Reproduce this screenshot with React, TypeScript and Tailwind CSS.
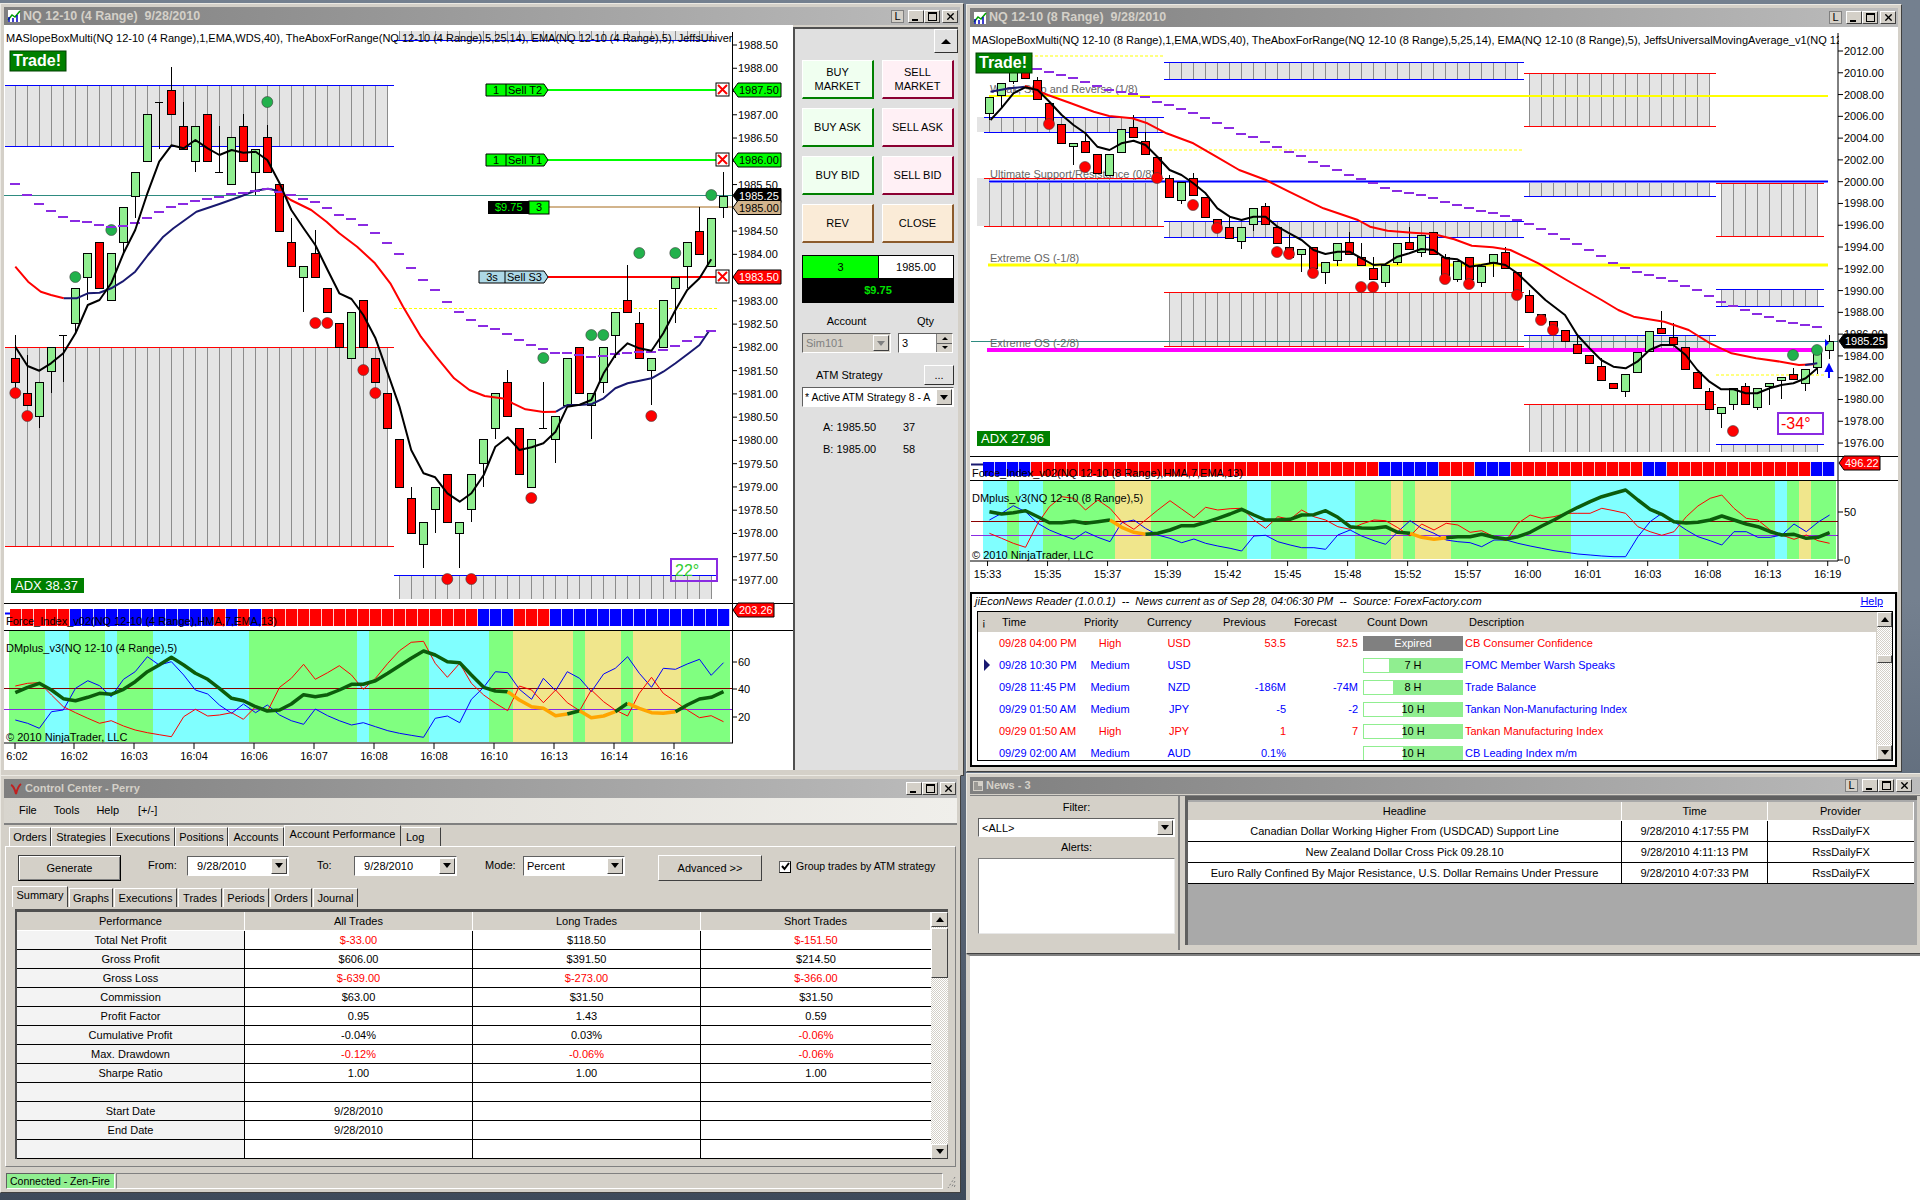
import type { ReactNode } from 'react';
import { X } from 'lucide-react';

type Bar = [string, number, number, number?, number?];
type Dot = [number, number];

const scale = (sx: number, ox: number, oy = 0) => (pts: number[][]) =>
  pts.map(([x, y]) => `${(ox + x / sx).toFixed(1)},${(oy + y / 3).toFixed(1)}`).join(' ');

const zA = scale(1.96, 0); // left chart
const zB = scale(1.96, 0, 400); // left lower panels
const z3 = scale(2.613, 780); // right chart, left half
const z4 = scale(2.85, 1370); // right chart, right half
const z5 = scale(1.633, 960, 300); // right chart, bottom

const LX = 15.3;
const RX = 989;

const leftBars: Bar[] = [
  ['r', 358, 382, 335, 388], ['r', 393, 405, 355], ['g', 382, 416, 0, 428], ['g', 347, 371, 0, 393],
  ['k', 335, 335, 335, 382], ['g', 288, 323, 0, 333], ['g', 253, 277, 0, 300], ['r', 242, 288],
  ['g', 253, 300], ['g', 207, 242, 0, 255], ['g', 172, 196, 0, 218], ['g', 114, 161],
  ['k', 102, 102, 102, 149], ['r', 90, 114, 67], ['r', 126, 149, 102], ['g', 126, 161, 0, 172],
  ['r', 114, 161], ['k', 172, 172, 126, 172], ['g', 137, 184], ['r', 126, 161, 114],
  ['g', 149, 172, 0, 195], ['r', 137, 172, 125], ['r', 184, 231], ['r', 242, 266, 218],
  ['g', 266, 277, 0, 312], ['r', 253, 277, 230], ['r', 288, 312], ['r', 323, 347],
  ['g', 312, 358], ['r', 300, 347], ['r', 358, 382], ['r', 393, 428],
  ['r', 439, 487], ['r', 498, 533, 487], ['g', 522, 544, 0, 568], ['g', 487, 509, 0, 533],
  ['r', 474, 522], ['g', 522, 533, 0, 568], ['g', 474, 509, 0, 522], ['g', 439, 463, 0, 487],
  ['g', 393, 428, 0, 439], ['r', 382, 416, 370], ['r', 428, 474], ['g', 439, 487],
  ['k', 428, 428, 382, 428], ['g', 416, 439, 0, 463], ['g', 358, 405], ['r', 347, 393],
  ['g', 393, 405, 0, 439], ['g', 347, 382, 0, 393], ['g', 312, 335, 0, 358], ['r', 300, 312, 265],
  ['r', 323, 358, 312], ['g', 358, 370, 0, 405], ['g', 300, 347], ['g', 277, 288, 0, 323],
  ['g', 242, 266, 0, 288], ['r', 231, 254, 207], ['g', 218, 266], ['g', 196, 207, 172, 218],
];

const rightBars: Bar[] = [
  ['g', 97, 113, 0, 120], ['g', 83, 95, 0, 107], ['g', 72, 81, 0, 84], ['r', 72, 78], ['r', 80, 99, 77],
  ['r', 103, 122], ['r', 124, 143], ['g', 143, 146, 0, 165], ['r', 141, 152, 132], ['r', 154, 173],
  ['g', 154, 175], ['g', 129, 152], ['r', 127, 137, 115], ['r', 141, 154, 132], ['r', 157, 176],
  ['r', 178, 197, 175], ['g', 182, 200, 0, 204], ['r', 178, 195, 173], ['r', 197, 217], ['r', 219, 227],
  ['r', 227, 238, 217], ['g', 227, 241, 0, 249], ['g', 208, 224, 0, 231], ['r', 206, 224, 203], ['r', 227, 243],
  ['r', 247, 257, 235], ['g', 249, 254, 0, 272], ['r', 247, 268], ['g', 262, 272, 0, 284], ['g', 243, 260, 0, 266],
  ['r', 242, 254, 232], ['r', 257, 265, 243], ['r', 268, 279, 257], ['g', 265, 282, 0, 287], ['g', 243, 262, 0, 265],
  ['r', 242, 249, 227], ['g', 235, 252, 0, 257], ['r', 232, 254], ['r', 257, 275, 254], ['g', 261, 279, 0, 282],
  ['r', 257, 279], ['g', 266, 282, 0, 287], ['g', 254, 262, 0, 277], ['r', 252, 268, 247], ['r', 272, 292],
  ['r', 295, 312, 290], ['r', 314, 322], ['r', 321, 332], ['r', 330, 341], ['r', 344, 353, 335],
  ['r', 355, 363], ['r', 366, 380, 358], ['r', 383, 388], ['g', 374, 391, 0, 397], ['g', 352, 372],
  ['g', 331, 351], ['r', 328, 333, 311], ['r', 337, 344, 323], ['r', 347, 369], ['r', 372, 388],
  ['r', 391, 409, 388], ['g', 407, 413, 0, 428], ['g', 388, 404, 0, 410], ['r', 386, 404, 383], ['g', 388, 407, 0, 410],
  ['g', 383, 386, 0, 405], ['g', 377, 380, 0, 399], ['r', 374, 379, 368], ['g', 369, 383, 0, 391], ['g', 350, 367, 0, 374],
  ['g', 341, 350, 335, 359],
];

const leftRedDots: Dot[] = [[0, 393], [1, 416], [25, 323], [26, 323], [29, 370], [30, 393], [36, 579], [38, 579], [43, 498], [53, 416]];
const leftGreenDots: Dot[] = [[5, 277], [8, 230], [21, 102], [44, 358], [48, 335], [49, 335], [52, 253], [55, 253], [58, 195]];
const rightRedDots: Dot[] = [[5, 124], [8, 167], [14, 178], [17, 205], [19, 228], [24, 252], [25, 254], [27, 273], [31, 287], [32, 287], [38, 279], [40, 284], [44, 295], [46, 320], [47, 330], [62, 431]];
const rightGreenDots: Dot[] = [[67, 355], [69, 350]];

const leftDashes = [552, 584, 612, 632, 651, 662, 666, 675, 680, 678, 668, 654, 636, 621, 612, 603, 597, 591, 582, 578, 572, 568, 575, 584, 596, 606, 624, 645, 656, 675, 698, 729, 762, 804, 840, 870, 906, 936, 960, 978, 987, 1002, 1020, 1035, 1047, 1058, 1059, 1065, 1071, 1067, 1062, 1058, 1056, 1055, 1050, 1038, 1023, 1011, 993];
const rightDashes = [208, 215, 225, 234, 245, 258, 270, 275, 282, 290, 305, 315, 327, 339, 353, 368, 385, 402, 410, 426, 440, 455, 467, 485, 497, 510, 524, 537, 548, 563, 572, 578, 585, 594, 605, 615, 624, 632, 638, 648, 660, 672, 687, 702, 717, 732, 749, 767, 789, 804, 816, 825, 833, 843, 857, 870, 887, 905, 917, 930, 942, 952, 962, 968, 975, 980];

const leftBlack = zA([[30, 1040], [54, 1098], [77, 1112], [100, 1090], [124, 1060], [148, 1000], [172, 915], [195, 900], [218, 850], [242, 760], [265, 690], [289, 580], [312, 485], [336, 436], [360, 445], [383, 420], [407, 445], [430, 465], [454, 450], [477, 458], [501, 455], [524, 480], [548, 550], [571, 630], [595, 685], [618, 735], [642, 810], [665, 880], [689, 897], [712, 945], [736, 1015], [760, 1120], [783, 1220], [806, 1350], [830, 1420], [853, 1432], [877, 1480], [901, 1505], [924, 1480], [948, 1425], [971, 1340], [995, 1312], [1018, 1350], [1042, 1342], [1065, 1330], [1089, 1295], [1112, 1220], [1136, 1214], [1159, 1200], [1183, 1120], [1206, 1065], [1230, 1030], [1253, 1045], [1277, 1052], [1300, 1000], [1324, 930], [1347, 870], [1371, 835], [1394, 778]]);
const leftRedA = zA([[30, 800], [55, 845], [80, 875], [100, 885], [125, 895]]);
const leftRedB = zA([[545, 572], [570, 600], [610, 630], [640, 665], [665, 700], [700, 740], [735, 790], [765, 850], [790, 920], [825, 1010], [855, 1070], [890, 1135], [920, 1170], [950, 1188], [990, 1196], [1005, 1210], [1030, 1228], [1065, 1236], [1090, 1235]]);
const leftNavyA = zA([[125, 895], [150, 895], [172, 880], [195, 878], [218, 865], [240, 845], [265, 815], [290, 765], [320, 710], [340, 685], [385, 635], [430, 612], [470, 590], [500, 572], [525, 566], [545, 572]]);
const leftNavyB = zA([[1090, 1235], [1112, 1215], [1136, 1215], [1160, 1212], [1183, 1195], [1206, 1165], [1230, 1150], [1277, 1135], [1300, 1115], [1324, 1090], [1350, 1060], [1371, 1035], [1390, 992]]);

const leftDmBands: [number, number, string][] = [[18, 88, 'g'], [88, 135, 'c'], [135, 206, 'g'], [206, 229, 'c'], [229, 300, 'g'], [300, 488, 'c'], [488, 700, 'g'], [700, 723, 'c'], [723, 841, 'g'], [841, 958, 'c'], [958, 1005, 'g'], [1005, 1123, 'y'], [1123, 1147, 'g'], [1147, 1217, 'y'], [1217, 1241, 'g'], [1241, 1335, 'y'], [1335, 1430, 'g']];
const rightDmBands: [number, number, string][] = [[38, 77, 'c'], [77, 96, 'g'], [96, 136, 'c'], [136, 253, 'g'], [253, 312, 'y'], [312, 469, 'g'], [469, 508, 'c'], [508, 567, 'g'], [567, 645, 'c'], [645, 704, 'g'], [704, 723, 'y'], [723, 743, 'g'], [743, 802, 'y'], [802, 998, 'g'], [998, 1174, 'c'], [1174, 1331, 'g'], [1331, 1351, 'c'], [1351, 1370, 'g'], [1370, 1390, 'y'], [1390, 1430, 'g']];
const bandColor: Record<string, string> = { g: '#80ff80', c: '#80ffff', y: '#f0e68c' };

const leftDmBlue = zB([[30, 960], [54, 970], [77, 985], [101, 935], [124, 930], [148, 865], [172, 842], [195, 857], [218, 890], [242, 838], [265, 815], [289, 770], [312, 795], [336, 785], [360, 825], [383, 870], [407, 882], [430, 915], [454, 940], [477, 912], [501, 938], [524, 915], [548, 945], [571, 962], [595, 973], [618, 927], [642, 947], [665, 962], [689, 975], [712, 968], [736, 980], [760, 992], [783, 1000], [806, 1006], [830, 1012], [853, 955], [877, 948], [901, 968], [924, 898], [948, 862], [971, 815], [995, 818], [1018, 868], [1042, 898], [1065, 835], [1089, 872], [1112, 815], [1136, 835], [1159, 875], [1183, 822], [1206, 805], [1230, 770], [1253, 820], [1277, 862], [1300, 805], [1324, 808], [1347, 792], [1371, 778], [1394, 826], [1418, 788]]);
const leftDmRed = zB([[30, 858], [54, 850], [77, 848], [101, 885], [124, 920], [148, 938], [172, 955], [195, 970], [218, 962], [242, 978], [265, 990], [289, 998], [312, 1004], [336, 1010], [360, 950], [383, 928], [407, 948], [430, 945], [454, 938], [477, 958], [501, 920], [524, 935], [548, 862], [571, 835], [595, 793], [618, 838], [642, 818], [665, 797], [689, 825], [712, 868], [736, 835], [760, 790], [783, 752], [806, 727], [830, 724], [853, 790], [877, 832], [901, 790], [924, 850], [948, 885], [971, 910], [995, 932], [1018, 858], [1042, 870], [1065, 908], [1089, 870], [1112, 908], [1136, 932], [1159, 870], [1183, 905], [1206, 930], [1230, 948], [1253, 880], [1277, 832], [1300, 880], [1324, 905], [1347, 930], [1371, 953], [1394, 947], [1418, 965]]);
const leftDmThick: [string, string][] = [
  ['#0b5c0b', zB([[30, 878], [54, 862], [77, 850], [101, 870], [124, 896], [148, 902], [172, 892], [195, 880], [218, 883], [242, 868], [265, 845], [289, 815], [312, 795], [336, 772], [360, 795], [383, 820], [407, 838], [430, 865], [454, 895], [477, 902], [501, 920], [524, 933], [548, 930], [571, 912], [595, 884], [618, 890], [642, 884], [665, 870], [689, 853], [712, 853], [736, 842], [760, 820], [783, 797], [806, 775], [830, 753], [853, 765], [877, 785], [901, 788], [924, 825], [948, 862], [971, 873], [995, 875]])],
  ['#ffa500', zB([[995, 875], [1018, 900], [1042, 920], [1065, 925], [1089, 947], [1112, 942]])],
  ['#0b5c0b', zB([[1112, 942], [1136, 932]])],
  ['#ffa500', zB([[1136, 932], [1159, 953], [1183, 948], [1206, 935]])],
  ['#0b5c0b', zB([[1206, 935], [1230, 910]])],
  ['#ffa500', zB([[1230, 910], [1253, 925], [1277, 938], [1300, 940], [1324, 935]])],
  ['#0b5c0b', zB([[1324, 935], [1347, 915], [1371, 897], [1394, 892], [1418, 875]])],
];

const rightBlack = `${z3([[550, 360], [578, 325], [610, 280], [641, 262], [673, 270], [704, 305], [736, 345], [767, 375], [798, 400], [829, 440], [861, 450], [892, 430], [924, 422], [955, 435], [986, 470], [1018, 510], [1049, 525], [1080, 550], [1112, 580], [1143, 625], [1175, 650], [1206, 660], [1237, 650], [1269, 650], [1300, 680], [1331, 700], [1363, 720], [1394, 750], [1425, 762], [1457, 755], [1488, 755], [1520, 775], [1551, 795]])} ${z4([[43, 793], [78, 770], [112, 760], [146, 747], [181, 750], [215, 775], [249, 778], [283, 800], [317, 795], [352, 788], [386, 795], [420, 820], [455, 855], [500, 900]])} ${z5([[988, 45], [1008, 105], [1028, 145], [1047, 180], [1067, 200], [1087, 205], [1106, 185], [1126, 150], [1145, 135], [1165, 135], [1185, 165], [1204, 210], [1224, 245], [1243, 268], [1263, 268], [1283, 280], [1302, 280], [1322, 265], [1341, 255], [1361, 250], [1381, 235], [1400, 205]])}`;
const rightRed = `${z3([[640, 258], [700, 285], [760, 310], [820, 335], [860, 348], [920, 355], [960, 370], [1010, 400], [1080, 430], [1140, 470], [1200, 510], [1270, 540], [1330, 575], [1420, 625], [1510, 660]])} ${z4([[0, 680], [50, 692], [120, 698], [180, 702], [240, 718], [290, 737], [350, 742], [400, 750], [480, 790], [560, 840], [610, 870], [660, 900]])} ${z5([[1075, 30], [1100, 50], [1150, 65], [1190, 90], [1225, 130], [1260, 160], [1300, 175], [1340, 185], [1370, 195], [1395, 193]])}`;

const rightDmBlue = z5([[48, 660], [68, 640], [87, 617], [107, 635], [127, 670], [146, 690], [166, 705], [186, 718], [205, 695], [225, 712], [245, 725], [264, 668], [284, 660], [303, 685], [323, 705], [343, 715], [362, 728], [382, 717], [401, 730], [421, 738], [441, 745], [460, 753], [480, 708], [499, 706], [519, 725], [539, 735], [558, 743], [578, 743], [597, 748], [617, 705], [637, 690], [656, 708], [676, 722], [695, 733], [715, 695], [735, 662], [754, 685], [774, 700], [794, 720], [813, 725], [833, 728], [852, 740], [872, 720], [892, 720], [911, 730], [931, 738], [950, 745], [970, 752], [990, 757], [1009, 762], [1029, 765], [1048, 768], [1068, 770], [1087, 770], [1107, 710], [1127, 665], [1146, 640], [1166, 665], [1186, 690], [1205, 710], [1225, 722], [1244, 735], [1264, 695], [1284, 695], [1303, 712], [1323, 712], [1342, 705], [1362, 672], [1382, 695], [1401, 667], [1420, 645]]);
const rightDmRed = z5([[48, 700], [68, 715], [87, 730], [107, 742], [127, 670], [146, 620], [166, 590], [186, 595], [205, 630], [225, 600], [245, 625], [264, 665], [284, 688], [303, 660], [323, 630], [343, 602], [362, 627], [382, 653], [401, 622], [421, 630], [441, 626], [460, 625], [480, 660], [499, 685], [519, 650], [539, 658], [558, 630], [578, 650], [597, 660], [617, 680], [637, 688], [656, 672], [676, 660], [695, 662], [715, 683], [735, 708], [754, 672], [774, 690], [794, 670], [813, 675], [833, 697], [852, 692], [872, 710], [892, 722], [911, 670], [931, 645], [950, 655], [970, 650], [990, 640], [1009, 640], [1029, 640], [1048, 625], [1068, 632], [1087, 640], [1107, 680], [1127, 695], [1146, 706], [1166, 695], [1186, 650], [1205, 618], [1225, 595], [1244, 585], [1264, 625], [1284, 655], [1303, 660], [1323, 690], [1342, 705], [1362, 718], [1382, 705], [1401, 722], [1420, 730]]);
const rightDmThick: [string, string][] = [
  ['#0b5c0b', z5([[48, 635], [68, 642], [87, 638], [107, 632], [127, 650], [146, 668], [166, 668], [186, 664], [205, 670], [225, 665], [245, 660]])],
  ['#ffa500', z5([[245, 660], [264, 682], [284, 697], [303, 703]])],
  ['#0b5c0b', z5([[303, 703], [323, 700], [343, 690], [362, 677], [382, 677], [401, 667], [421, 655], [441, 642], [460, 628], [480, 645], [499, 660], [519, 660], [539, 658], [558, 645], [578, 644], [597, 632], [617, 652], [637, 680], [656, 684], [676, 685], [695, 680], [715, 697], [735, 700]])],
  ['#ffa500', z5([[735, 700], [754, 712], [774, 718], [794, 713]])],
  ['#0b5c0b', z5([[794, 713], [813, 710], [833, 710], [852, 703], [872, 712], [892, 717], [911, 710], [931, 697], [950, 678], [970, 660], [990, 640], [1009, 622], [1029, 605], [1048, 590], [1068, 580], [1087, 570], [1107, 600], [1127, 628], [1146, 643], [1166, 665], [1186, 669], [1205, 667], [1225, 660], [1244, 648], [1264, 660], [1284, 672], [1303, 680], [1323, 695], [1342, 705], [1362, 703], [1382, 715], [1401, 712], [1420, 698]])],
];

const leftPrices = ['1988.50', '1988.00', '1987.50', '1987.00', '1986.50', '1986.00', '1985.50', '1985.00', '1984.50', '1984.00', '1983.50', '1983.00', '1982.50', '1982.00', '1981.50', '1981.00', '1980.50', '1980.00', '1979.50', '1979.00', '1978.50', '1978.00', '1977.50', '1977.00'];
const rightPrices = ['2012.00', '2010.00', '2008.00', '2006.00', '2004.00', '2002.00', '2000.00', '1998.00', '1996.00', '1994.00', '1992.00', '1990.00', '1988.00', '1986.00', '1984.00', '1982.00', '1980.00', '1978.00', '1976.00'];
const leftTimes: [string, number][] = [['6:02', 17], ['16:02', 74], ['16:03', 134], ['16:04', 194], ['16:06', 254], ['16:07', 314], ['16:08', 374], ['16:08', 434], ['16:10', 494], ['16:13', 554], ['16:14', 614], ['16:16', 674]];
const rightTimes: [string, number][] = [['15:33', 45], ['15:35', 143], ['15:37', 241], ['15:39', 339], ['15:42', 437], ['15:45', 535], ['15:48', 633], ['15:52', 731], ['15:57', 829], ['16:00', 927], ['16:01', 1025], ['16:03', 1123], ['16:08', 1221], ['16:13', 1319], ['16:19', 1417]];

// runs of force index squares
const leftForce: [string, number][] = [['r', 5], ['b', 12], ['r', 1], ['b', 1], ['r', 1], ['b', 1], ['r', 18], ['b', 3], ['r', 3], ['b', 15]];
const rightForce: [string, number][] = [['b', 4], ['r', 29], ['b', 5], ['r', 3], ['b', 3], ['r', 11], ['b', 2], ['r', 12], ['b', 2]];

function expand(runs: [string, number][]) {
  return runs.flatMap(([c, n]) => Array.from({ length: n }, () => c));
}

function Candles({ bars, x0, w }: { bars: Bar[]; x0: number; w: number }) {
  return (
    <g shapeRendering="crispEdges">
      {bars.map(([c, t, b, hi, lo], i) => {
        const x = x0 + 12 * i;
        const top = hi || t;
        const bottom = lo || b;
        return (
          <g key={i}>
            <line x1={x} x2={x} y1={top} y2={bottom} stroke="#000" />
            {c === 'k' ? (
              <line x1={x - 4} x2={x + 4} y1={t} y2={t} stroke="#000" />
            ) : (
              <rect x={x - w / 2} y={t} width={w} height={b - t} fill={c === 'r' ? '#ff0000' : '#90ee90'} stroke="#000" />
            )}
          </g>
        );
      })}
    </g>
  );
}

function Dots({ dots, x0, fill }: { dots: Dot[]; x0: number; fill: string }) {
  return (
    <g>
      {dots.map(([i, y]) => (
        <ellipse key={`${i}-${y}`} cx={x0 + 12 * i} cy={y} rx={5.5} ry={5.5} fill={fill} stroke="#404040" strokeWidth={0.6} />
      ))}
    </g>
  );
}

function Dashes({ ys, x0, first = 0 }: { ys: number[]; x0: number; first?: number }) {
  return (
    <g shapeRendering="crispEdges">
      {ys.map((y, i) => {
        const x = x0 + 12 * (i + first);
        return <line key={i} x1={x - 5} x2={x + 5} y1={y / 3} y2={y / 3} stroke="#8a2be2" strokeWidth={2} />;
      })}
    </g>
  );
}

function Box(p: { x0: number; gx1: number; gx2: number; y1: number; y2: number; lx1: number; lx2: number; top?: string; bottom?: string }) {
  const lines: number[] = [];
  for (let x = p.x0; x <= p.gx2 + 1; x += 12) if (x >= p.gx1 - 1) lines.push(x);
  return (
    <g shapeRendering="crispEdges">
      <rect x={p.gx1} y={p.y1} width={p.gx2 - p.gx1} height={p.y2 - p.y1} fill="#e4e4e4" />
      {lines.map((x) => (
        <line key={x} x1={x} x2={x} y1={p.y1} y2={p.y2} stroke="#8c8c8c" />
      ))}
      {p.top && <line x1={p.lx1} x2={p.lx2} y1={p.y1} y2={p.y1} stroke={p.top} />}
      {p.bottom && <line x1={p.lx1} x2={p.lx2} y1={p.y2} y2={p.y2} stroke={p.bottom} />}
    </g>
  );
}

function Line({ pts, color, w = 2 }: { pts: string; color: string; w?: number }) {
  return <polyline points={pts} fill="none" stroke={color} strokeWidth={w} strokeLinejoin="round" />;
}

function PriceTag({ x, y, label, fill, text, w = 48 }: { x: number; y: number; label: string; fill: string; text: string; w?: number }) {
  return (
    <g>
      <polygon points={`${x},${y} ${x + 5},${y - 7} ${x + w},${y - 7} ${x + w},${y + 7} ${x + 5},${y + 7}`} fill={fill} stroke="#000" />
      <text x={x + 6} y={y + 4} fill={text} className="text-[11px]">
        {label}
      </text>
    </g>
  );
}

function OrderTag({ x, y, qty, label, fill, qtyW = 20 }: { x: number; y: number; qty: string; label: string; fill: string; qtyW?: number }) {
  return (
    <g>
      <polygon points={`${x},${y - 6} 544,${y - 6} 548,${y} 544,${y + 6} ${x},${y + 6}`} fill={fill} stroke="#000" />
      <line x1={x + qtyW} x2={x + qtyW} y1={y - 6} y2={y + 6} stroke="#000" />
      <text x={x + qtyW / 2} y={y + 4} textAnchor="middle" fill="#000" className="text-[11px]">
        {qty}
      </text>
      <text x={x + qtyW + 2} y={y + 4} fill="#000" className="text-[11px]">
        {label}
      </text>
    </g>
  );
}

function CloseBox({ y }: { y: number }) {
  return (
    <g>
      <rect x={716} y={y - 7} width={13} height={13} fill="#fff" stroke="#000" />
      <path d={`M718 ${y - 5} L727 ${y + 4} M727 ${y - 5} L718 ${y + 4}`} stroke="#ff0000" strokeWidth={2} />
    </g>
  );
}

function Label({ x, y, children, fill = '#000', anchor }: { x: number; y: number; children: ReactNode; fill?: string; anchor?: 'middle' | 'end' }) {
  return (
    <text x={x} y={y + 4} fill={fill} textAnchor={anchor} className="text-[11px]">
      {children}
    </text>
  );
}

function LeftChart() {
  return (
    <svg viewBox="4 25 789 745" className="w-[789px] h-[745px] shrink-0 bg-white block">
      <Box x0={LX} gx1={5} gx2={388} y1={85} y2={146} lx1={5} lx2={394} top="#0000ff" bottom="#0000ff" />
      <Box x0={LX} gx1={5} gx2={388} y1={347} y2={546} lx1={5} lx2={394} top="#ff0000" bottom="#ff0000" />
      <Box x0={LX} gx1={399} gx2={712} y1={31} y2={40} lx1={394} lx2={716} bottom="#0000ff" />
      <Box x0={LX} gx1={399} gx2={712} y1={575} y2={599} lx1={394} lx2={716} top="#0000ff" />
      <line x1={394} x2={717} y1={308.5} y2={308.5} stroke="#ffff00" strokeDasharray="3 2" />

      <line x1={4} x2={732} y1={195.5} y2={195.5} stroke="#2e8b80" />
      <line x1={548} x2={716} y1={90} y2={90} stroke="#00ff00" strokeWidth={2} />
      <line x1={548} x2={716} y1={160} y2={160} stroke="#00ff00" strokeWidth={2} />
      <line x1={548} x2={732} y1={207} y2={207} stroke="#d2b48c" strokeWidth={2} />
      <line x1={548} x2={716} y1={277} y2={277} stroke="#ff0000" strokeWidth={2} />

      <Candles bars={leftBars} x0={LX} w={8} />
      <Dots dots={leftRedDots} x0={LX} fill="#ff0000" />
      <Dots dots={leftGreenDots} x0={LX} fill="#22b14c" />
      <Line pts={leftRedA} color="#ff0000" />
      <Line pts={leftRedB} color="#ff0000" />
      <Line pts={leftNavyA} color="#191970" />
      <Line pts={leftNavyB} color="#191970" />
      <Dashes ys={leftDashes} x0={LX} />
      <Line pts={leftBlack} color="#000" />

      <OrderTag x={486} y={90} qty="1" label="Sell T2" fill="#00ff00" />
      <OrderTag x={486} y={160} qty="1" label="Sell T1" fill="#00ff00" />
      <OrderTag x={479} y={277} qty="3s" label="Sell S3" fill="#add8e6" qtyW={26} />
      <rect x={488} y={201} width={41} height={13} fill="#000" />
      <rect x={529} y={201} width={20} height={13} fill="#00ff00" stroke="#000" />
      <Label x={495} y={207} fill="#00ff00">$9.75</Label>
      <Label x={536} y={207}>3</Label>
      <CloseBox y={90} />
      <CloseBox y={160} />
      <CloseBox y={277} />

      <rect x={10} y={51} width={56} height={20} fill="#008000" stroke="#004000" />
      <text x={13} y={66} fill="#fff" className="text-[16px] font-bold">Trade!</text>
      <rect x={11} y={578} width={73} height={15} fill="#008000" />
      <text x={15} y={590} fill="#fff" className="text-[13px]">ADX 38.37</text>
      <rect x={671} y={559} width={46} height={22} fill="none" stroke="#8a2be2" strokeWidth={2} />
      <text x={675} y={576} fill="#32cd32" className="text-[16px]">22°</text>

      <Label x={6} y={38}>MASlopeBoxMulti(NQ 12-10 (4 Range),1,EMA,WDS,40), TheAboxForRange(NQ 12-10 (4 Range),5,25,14), EMA(NQ 12-10 (4 Range),5), JeffsUnivers</Label>

      {/* force index */}
      <rect x={4} y={603} width={729} height={27} fill="#fff" />
      <line x1={5} x2={10} y1={613.5} y2={613.5} stroke="#0000ff" strokeWidth={2} />
      {expand(leftForce).map((c, i) => (
        <rect key={i} x={10 + 12 * i} y={609} width={11.2} height={17} fill={c === 'r' ? '#ff0000' : '#0000ff'} />
      ))}
      <Label x={6} y={621}>Force_Index_v02(NQ 12-10 (4 Range),HMA,7,EMA,13)</Label>

      {/* dmplus */}
      <rect x={4} y={630} width={729} height={113} fill="#fff" />
      <g shapeRendering="crispEdges">
        {leftDmBands.map(([a, b, c]) => (
          <rect key={a} x={a / 1.96} y={631} width={(b - a) / 1.96} height={111} fill={bandColor[c]} />
        ))}
      </g>
      <line x1={4} x2={732} y1={688.5} y2={688.5} stroke="#8b0000" />
      <line x1={4} x2={732} y1={709.5} y2={709.5} stroke="#8a2be2" />
      <Line pts={leftDmBlue} color="#0000ff" w={1} />
      <Line pts={leftDmRed} color="#ff0000" w={1} />
      {leftDmThick.map(([c, pts], i) => (
        <Line key={i} pts={pts} color={c} w={3.5} />
      ))}
      <Label x={6} y={648}>DMplus_v3(NQ 12-10 (4 Range),5)</Label>
      <Label x={6} y={737}>© 2010 NinjaTrader, LLC</Label>

      {/* axis */}
      <rect x={733} y={25} width={60} height={745} fill="#fff" />
      <line x1={732.5} x2={732.5} y1={32} y2={743} stroke="#000" />
      {leftPrices.map((p, i) => (
        <g key={p}>
          <line x1={732} x2={737} y1={45 + 23.26 * i} y2={45 + 23.26 * i} stroke="#000" />
          <Label x={738} y={45 + 23.26 * i}>{p}</Label>
        </g>
      ))}
      <line x1={732} x2={737} y1={662} y2={662} stroke="#000" />
      <Label x={738} y={662}>60</Label>
      <line x1={732} x2={737} y1={689} y2={689} stroke="#000" />
      <Label x={738} y={689}>40</Label>
      <line x1={732} x2={737} y1={717} y2={717} stroke="#000" />
      <Label x={738} y={717}>20</Label>
      <line x1={4} x2={793} y1={603.5} y2={603.5} stroke="#000" />
      <line x1={4} x2={793} y1={630.5} y2={630.5} stroke="#000" />
      <line x1={4} x2={733} y1={743} y2={743} stroke="#000" />
      {leftTimes.map(([t, x]) => (
        <g key={`${t}${x}`}>
          <line x1={x === 17 ? 15 : x} x2={x === 17 ? 15 : x} y1={743} y2={749} stroke="#000" />
          <Label x={x} y={756} anchor="middle">{t}</Label>
        </g>
      ))}
      <PriceTag x={733} y={90} label="1987.50" fill="#00ff00" text="#000" />
      <PriceTag x={733} y={160} label="1986.00" fill="#00ff00" text="#000" />
      <PriceTag x={733} y={195.5} label="1985.25" fill="#000" text="#fff" />
      <PriceTag x={733} y={207.5} label="1985.00" fill="#d2b48c" text="#000" />
      <PriceTag x={733} y={277} label="1983.50" fill="#ff0000" text="#fff" />
      <PriceTag x={733} y={610} label="203.26" fill="#ff0000" text="#fff" w={41} />
    </svg>
  );
}

function RightChart() {
  return (
    <svg viewBox="970 27 928 565" className="w-[928px] h-[565px] shrink-0 bg-white block">
      <Box x0={RX} gx1={1170} gx2={1518} y1={62} y2={79} lx1={1164} lx2={1524} top="#0000ff" bottom="#0000ff" />
      <Box x0={RX} gx1={1530} gx2={1710} y1={73} y2={126} lx1={1524} lx2={1716} top="#ff0000" bottom="#ff0000" />
      <Box x0={RX} gx1={977} gx2={1158} y1={117} y2={132} lx1={984} lx2={1164} top="#0000ff" bottom="#0000ff" />
      <Box x0={RX} gx1={977} gx2={1158} y1={178} y2={226} lx1={984} lx2={1164} top="#ff0000" bottom="#ff0000" />
      <Box x0={RX} gx1={1170} gx2={1518} y1={221} y2={237} lx1={1164} lx2={1524} top="#0000ff" bottom="#0000ff" />
      <Box x0={RX} gx1={1170} gx2={1518} y1={292} y2={346} lx1={1164} lx2={1524} top="#ff0000" bottom="#ff0000" />
      <Box x0={RX} gx1={1530} gx2={1710} y1={180} y2={196} lx1={1524} lx2={1716} top="#0000ff" bottom="#0000ff" />
      <Box x0={RX} gx1={1722} gx2={1818} y1={183} y2={236} lx1={1716} lx2={1824} top="#ff0000" bottom="#ff0000" />
      <Box x0={RX} gx1={1722} gx2={1818} y1={289} y2={306} lx1={1716} lx2={1824} top="#0000ff" bottom="#0000ff" />
      <Box x0={RX} gx1={1530} gx2={1710} y1={335} y2={351} lx1={1524} lx2={1716} top="#0000ff" bottom="#0000ff" />
      <Box x0={RX} gx1={1530} gx2={1710} y1={404} y2={452} lx1={1524} lx2={1716} top="#ff0000" />
      <Box x0={RX} gx1={1722} gx2={1818} y1={444} y2={452} lx1={1716} lx2={1824} top="#0000ff" />

      <line x1={1000} x2={1164} y1={56} y2={56} stroke="#ffff00" strokeDasharray="3 2" />
      <line x1={1164} x2={1524} y1={150} y2={150} stroke="#ffff00" strokeDasharray="3 2" />
      <line x1={1716} x2={1824} y1={375} y2={375} stroke="#ffff00" strokeDasharray="3 2" />
      <line x1={989} x2={1828} y1={96} y2={96} stroke="#ffff00" strokeWidth={2} />
      <line x1={989} x2={1828} y1={181.5} y2={181.5} stroke="#8080ff" strokeWidth={3} />
      <line x1={989} x2={1828} y1={181.5} y2={181.5} stroke="#0000ff" />
      <line x1={988} x2={1828} y1={265} y2={265} stroke="#ffff00" strokeWidth={3} />
      <line x1={987} x2={1813} y1={350} y2={350} stroke="#ff00ff" strokeWidth={4} />
      <line x1={971} x2={1838} y1={341.5} y2={341.5} stroke="#2e8b80" />
      <Label x={990} y={89} fill="#666">Weak, Stop and Reverse (1/8)</Label>
      <Label x={990} y={174} fill="#666">Ultimate Support/Resistance (0/8)</Label>
      <Label x={990} y={258} fill="#666">Extreme OS (-1/8)</Label>
      <Label x={990} y={343} fill="#666">Extreme OS (-2/8)</Label>

      <Candles bars={rightBars} x0={RX} w={8} />
      <Dots dots={rightRedDots} x0={RX} fill="#ff0000" />
      <Dots dots={rightGreenDots} x0={RX} fill="#22b14c" />
      <Line pts={z3([[550, 275], [600, 265], [640, 260]])} color="#191970" />
      <Line pts={rightRed} color="#ff0000" />
      <Line pts={z5([[1380, 195], [1400, 190]])} color="#191970" />
      <Dashes ys={rightDashes} x0={RX} first={4} />
      <Line pts={rightBlack} color="#000" />

      <path d="M1829 378 V369 M1826 371 L1829 365 L1832 371 Z" stroke="#0000ff" strokeWidth={2} fill="#0000ff" />
      <polygon points="1825,339 1829,343 1825,347" fill="#0000ff" />

      <rect x={976} y={53} width={56} height={20} fill="#008000" stroke="#004000" />
      <text x={979} y={68} fill="#fff" className="text-[16px] font-bold">Trade!</text>
      <rect x={977} y={431} width={73} height={15} fill="#008000" />
      <text x={981} y={443} fill="#fff" className="text-[13px]">ADX 27.96</text>
      <rect x={1778} y={413} width={45} height={21} fill="#fff" stroke="#8a2be2" strokeWidth={2} />
      <text x={1781} y={429} fill="#ff0000" className="text-[16px]">-34°</text>

      <Label x={972} y={40}>MASlopeBoxMulti(NQ 12-10 (8 Range),1,EMA,WDS,40), TheAboxForRange(NQ 12-10 (8 Range),5,25,14), EMA(NQ 12-10 (8 Range),5), JeffsUniversalMovingAverage_v1(NQ 12</Label>

      {/* force index */}
      <rect x={970} y={456} width={868} height={24} fill="#fff" />
      <line x1={971} x2={983} y1={464.5} y2={464.5} stroke="#191970" strokeWidth={2} />
      {expand(rightForce).map((c, i) => (
        <rect key={i} x={983 + 12 * i} y={462} width={11.2} height={14} fill={c === 'r' ? '#ff0000' : '#0000ff'} />
      ))}
      <Label x={972} y={473}>Force_Index_v02(NQ 12-10 (8 Range),HMA,7,EMA,13)</Label>

      {/* dmplus */}
      <rect x={970} y={480} width={868} height={82} fill="#fff" />
      <g shapeRendering="crispEdges">
        {rightDmBands.map(([a, b, c]) => (
          <rect key={a} x={960 + a / 1.633} y={481} width={(b - a) / 1.633} height={78} fill={bandColor[c]} />
        ))}
      </g>
      <line x1={971} x2={1838} y1={521.5} y2={521.5} stroke="#8b0000" />
      <line x1={971} x2={1838} y1={535.5} y2={535.5} stroke="#8a2be2" />
      <Line pts={rightDmBlue} color="#0000ff" w={1} />
      <Line pts={rightDmRed} color="#ff0000" w={1} />
      {rightDmThick.map(([c, pts], i) => (
        <Line key={i} pts={pts} color={c} w={3.5} />
      ))}
      <Label x={972} y={498}>DMplus_v3(NQ 12-10 (8 Range),5)</Label>
      <Label x={972} y={555}>© 2010 NinjaTrader, LLC</Label>

      {/* axis */}
      <rect x={1839} y={27} width={59} height={565} fill="#fff" />
      <line x1={1838} x2={1838} y1={33} y2={561} stroke="#000" />
      {rightPrices.map((p, i) => (
        <g key={p}>
          <line x1={1838} x2={1843} y1={51 + 21.78 * i} y2={51 + 21.78 * i} stroke="#000" />
          <Label x={1844} y={51 + 21.78 * i}>{p}</Label>
        </g>
      ))}
      <line x1={1838} x2={1843} y1={512} y2={512} stroke="#000" />
      <Label x={1844} y={512}>50</Label>
      <line x1={1838} x2={1843} y1={560} y2={560} stroke="#000" />
      <Label x={1844} y={560}>0</Label>
      <line x1={970} x2={1898} y1={456.5} y2={456.5} stroke="#000" />
      <line x1={970} x2={1898} y1={480.5} y2={480.5} stroke="#000" />
      <line x1={970} x2={1838} y1={561} y2={561} stroke="#000" />
      {rightTimes.map(([t, x]) => (
        <g key={t}>
          <line x1={960 + x / 1.633} x2={960 + x / 1.633} y1={561} y2={566} stroke="#000" />
          <Label x={960 + x / 1.633} y={574} anchor="middle">{t}</Label>
        </g>
      ))}
      <PriceTag x={1839} y={341} label="1985.25" fill="#000" text="#fff" />
      <PriceTag x={1839} y={463} label="496.22" fill="#ff0000" text="#fff" w={41} />
    </svg>
  );
}

function Win({ className, children }: { className: string; children: ReactNode }) {
  return (
    <div className={`absolute bg-[#d4d0c8] p-[3px] border border-t-[#eceae4] border-l-[#eceae4] border-b-[#404040] border-r-[#404040] flex flex-col overflow-hidden ${className}`}>
      {children}
    </div>
  );
}

function Ctl({ children, flat }: { children: ReactNode; flat?: boolean }) {
  return (
    <div
      className={
        flat
          ? 'w-[13px] h-[13px] flex items-center justify-center border border-[#808080] bg-[#d4d0c8] text-[11px] leading-none'
          : 'w-[16px] h-[13px] flex items-center justify-center border border-t-white border-l-white border-b-[#404040] border-r-[#404040] bg-[#d4d0c8]'
      }
    >
      {children}
    </div>
  );
}

function Controls({ lock = true }: { lock?: boolean }) {
  return (
    <div className="ml-auto flex items-center">
      {lock && (
        <div className="mr-[4px]">
          <Ctl flat>L</Ctl>
        </div>
      )}
      <Ctl>
        <div className="w-[6px] h-[2px] bg-black mt-[7px] mr-[3px]" />
      </Ctl>
      <Ctl>
        <div className="w-[9px] h-[9px] border border-black border-t-2" />
      </Ctl>
      <div className="ml-[2px]">
        <Ctl>
          <X size={11} strokeWidth={3} color="#000" />
        </Ctl>
      </div>
    </div>
  );
}

function ChartIcon() {
  return (
    <svg width="14" height="14" viewBox="0 0 14 14" className="shrink-0 ml-[1px]">
      <rect x="0.5" y="0.5" width="13" height="13" fill="#fff" stroke="#808080" />
      <path d="M1 11 L5 6 L8 8 L13 2" stroke="#00a000" strokeWidth="1.5" fill="none" />
      <path d="M2 13 V8 M6 13 V9 M10 13 V6" stroke="#0000c0" strokeWidth="1.5" />
    </svg>
  );
}

function TitleBar({ title, h, icon, lock, pr, big }: { title: string; h: string; icon: ReactNode; lock?: boolean; pr: string; big?: boolean }) {
  return (
    <div className={`${h} ${pr} shrink-0 flex items-center gap-[2px] bg-linear-to-r from-[#7f7f7f] to-[#bcbcbc] pl-[2px]`}>
      {icon}
      <span className={`font-bold text-[#d4d0c8] whitespace-pre ${big ? 'text-[12.5px]' : 'text-[11px]'}`}>{title}</span>
      <Controls lock={lock} />
    </div>
  );
}

function ComboArrow({ dim }: { dim?: boolean }) {
  return (
    <div className="w-[16px] self-stretch m-[1px] flex items-center justify-center bg-[#d4d0c8] border border-t-white border-l-white border-b-[#404040] border-r-[#404040] shrink-0">
      <div className={`border-x-[4px] border-x-transparent border-t-[5px] ${dim ? 'border-t-[#808080]' : 'border-t-black'}`} />
    </div>
  );
}

function Combo({ className, text, dim, small }: { className: string; text: string; dim?: boolean; small?: boolean }) {
  return (
    <div className={`flex items-stretch border border-t-[#606060] border-l-[#606060] border-b-white border-r-white overflow-hidden ${dim ? 'bg-[#d4d0c8] text-[#808080]' : 'bg-white'} ${className}`}>
      <span className={`flex-1 leading-[18px] whitespace-pre overflow-hidden ${small ? 'pl-[2px] text-[10.5px]' : 'pl-[3px] text-[11px]'}`}>{text}</span>
      <ComboArrow dim={dim} />
    </div>
  );
}

const orderButtons = [
  { label: 'BUY MARKET', cls: 'bg-[#f0fff0] border-r-[#008000] border-b-[#008000]' },
  { label: 'SELL MARKET', cls: 'bg-[#fff0f5] border-r-[#8b0032] border-b-[#8b0032]' },
  { label: 'BUY ASK', cls: 'bg-[#f0fff0] border-r-[#008000] border-b-[#008000]' },
  { label: 'SELL ASK', cls: 'bg-[#fff0f5] border-r-[#8b0032] border-b-[#8b0032]' },
  { label: 'BUY BID', cls: 'bg-[#f0fff0] border-r-[#008000] border-b-[#008000]' },
  { label: 'SELL BID', cls: 'bg-[#fff0f5] border-r-[#8b0032] border-b-[#8b0032]' },
  { label: 'REV', cls: 'bg-[#faebd7] border-r-[#8b5a2b] border-b-[#8b5a2b]' },
  { label: 'CLOSE', cls: 'bg-[#faebd7] border-r-[#8b5a2b] border-b-[#8b5a2b]' },
];

function OrderPanel() {
  return (
    <div className="w-[165px] h-[743px] mt-[2px] shrink-0 bg-[#e0e0e0] border-l-2 border-t-2 border-[#505050] flex flex-col pl-[7px] text-[11px] relative">
      <div className="flex justify-end">
        <div className="w-[24px] h-[24px] border border-t-white border-l-white border-b-[#303030] border-r-[#303030] bg-[#e0e0e0] flex items-center justify-center">
          <div className="border-x-[5px] border-x-transparent border-b-[5px] border-b-black" />
        </div>
      </div>
      <div className="grid grid-cols-[72px_72px] gap-x-[8px] gap-y-[9px] mt-[7px]">
        {orderButtons.map((b) => (
          <div key={b.label} className={`h-[39px] w-[72px] flex items-center justify-center text-center leading-[14px] border-t border-l border-t-white border-l-white border-r-2 border-b-2 ${b.cls}`}>
            <span className={b.label.includes('MARKET') ? 'w-[50px]' : ''}>{b.label}</span>
          </div>
        ))}
      </div>
      <div className="w-[152px] mt-[12px] border border-black">
        <div className="flex h-[22px] items-center text-center">
          <div className="w-[76px] h-full bg-[#00ff00] leading-[22px] border-r border-black">3</div>
          <div className="flex-1 bg-white leading-[22px]">1985.00</div>
        </div>
        <div className="h-[24px] bg-black text-[#00e000] font-bold text-center leading-[24px]">$9.75</div>
      </div>
      <div className="flex mt-[10px] h-[16px] leading-[16px]">
        <div className="w-[89px] text-center">Account</div>
        <div className="w-[55px] ml-[7px] text-center">Qty</div>
      </div>
      <div className="flex mt-[4px] h-[20px]">
        <Combo className="w-[89px]" text="Sim101" dim />
        <div className="w-[55px] ml-[7px] flex bg-white border border-t-[#606060] border-l-[#606060] border-b-white border-r-white">
          <span className="flex-1 pl-[3px] leading-[18px]">3</span>
          <div className="w-[16px] flex flex-col border-l border-[#808080]">
            <div className="flex-1 bg-[#d4d0c8] border-b border-[#606060] flex items-center justify-center">
              <div className="border-x-[3px] border-x-transparent border-b-[3px] border-b-black" />
            </div>
            <div className="flex-1 bg-[#d4d0c8] flex items-center justify-center">
              <div className="border-x-[3px] border-x-transparent border-t-[3px] border-t-black" />
            </div>
          </div>
        </div>
      </div>
      <div className="flex items-center mt-[12px] h-[20px]">
        <span className="ml-[14px]">ATM Strategy</span>
        <div className="ml-auto mr-[4px] w-[30px] h-[20px] border border-t-white border-l-white border-b-[#303030] border-r-[#303030] text-center leading-[18px]">...</div>
      </div>
      <Combo small className="w-[152px] h-[20px] mt-[2px]" text="* Active ATM Strategy 8 - A" />
      <div className="flex mt-[9px] h-[22px] leading-[22px]">
        <span className="ml-[21px] w-[80px]">A: 1985.50</span>
        <span>37</span>
      </div>
      <div className="flex h-[22px] leading-[22px]">
        <span className="ml-[21px] w-[80px]">B: 1985.00</span>
        <span>58</span>
      </div>
    </div>
  );
}

const econRows = [
  { t: '09/28 04:00 PM', p: 'High', c: 'USD', prev: '53.5', f: '52.5', cd: 'Expired', bar: 0, d: 'CB Consumer Confidence', red: true },
  { t: '09/28 10:30 PM', p: 'Medium', c: 'USD', prev: '', f: '', cd: '7 H', bar: 27, d: 'FOMC Member Warsh Speaks', mark: true },
  { t: '09/28 11:45 PM', p: 'Medium', c: 'NZD', prev: '-186M', f: '-74M', cd: '8 H', bar: 31, d: 'Trade Balance' },
  { t: '09/29 01:50 AM', p: 'Medium', c: 'JPY', prev: '-5', f: '-2', cd: '10 H', bar: 41, d: 'Tankan Non-Manufacturing Index' },
  { t: '09/29 01:50 AM', p: 'High', c: 'JPY', prev: '1', f: '7', cd: '10 H', bar: 41, d: 'Tankan Manufacturing Index', red: true },
  { t: '09/29 02:00 AM', p: 'Medium', c: 'AUD', prev: '0.1%', f: '', cd: '10 H', bar: 41, d: 'CB Leading Index m/m' },
];

function ScrollArrow({ up }: { up?: boolean }) {
  return (
    <div className="h-[15px] shrink-0 bg-[#d4d0c8] border border-t-white border-l-white border-b-[#404040] border-r-[#404040] flex items-center justify-center">
      <div className={up ? 'border-x-[4px] border-x-transparent border-b-[5px] border-b-black' : 'border-x-[4px] border-x-transparent border-t-[5px] border-t-black'} />
    </div>
  );
}

const dither = 'bg-[repeating-conic-gradient(#d4d0c8_0%_25%,#ffffff_0%_50%)] bg-size-[2px_2px]';

function EconReader() {
  return (
    <div className="w-[927px] h-[175px] border-2 border-black bg-white flex flex-col shrink-0 text-[11px]">
      <div className="h-[17px] shrink-0 flex items-center pl-[3px] pr-[12px] pb-[2px] italic whitespace-pre">
        <span>jiEconNews Reader (1.0.0.1)  --  News current as of Sep 28, 04:06:30 PM  --  Source: ForexFactory.com</span>
        <span className="ml-auto not-italic text-[#0000ff] underline">Help</span>
      </div>
      <div className="ml-[5px] w-[916px] h-[150px] border border-black flex overflow-hidden">
        <div className="flex-1 overflow-hidden">
          <div className="h-[20px] bg-[#d4d0c8] flex items-center">
            <span className="w-[21px] pl-[4px]">¡</span>
            <span className="w-[76px] pl-[3px]">Time</span>
            <span className="w-[70px] pl-[9px]">Priority</span>
            <span className="w-[68px] pl-[2px]">Currency</span>
            <span className="w-[73px] pl-[10px]">Previous</span>
            <span className="w-[72px] pl-[8px]">Forecast</span>
            <span className="w-[105px] pl-[9px]">Count Down</span>
            <span className="ml-[6px]">Description</span>
          </div>
          {econRows.map((r) => (
            <div key={r.t + r.d} className={`h-[22px] flex items-center ${r.red ? 'text-[#ff0000]' : 'text-[#0000ff]'}`}>
              <span className="w-[21px] pl-[6px] flex">
                {r.mark && <span className="border-y-[6px] border-y-transparent border-l-[6px] border-l-[#191970]" />}
              </span>
              <span className="w-[76px] whitespace-nowrap">{r.t}</span>
              <span className="w-[70px] text-center">{r.p}</span>
              <span className="w-[68px] text-center">{r.c}</span>
              <span className="w-[73px] text-right">{r.prev}</span>
              <span className="w-[72px] text-right">{r.f}</span>
              {r.cd === 'Expired' ? (
                <span className="ml-[5px] w-[100px] h-[15px] bg-[#808080] text-white text-center leading-[15px]">Expired</span>
              ) : (
                <span className="ml-[5px] w-[100px] h-[15px] relative bg-[#90ee90] text-black text-center leading-[15px]">
                  <span className="absolute left-0 top-0 bottom-0 bg-white border border-[#90ee90]" style={{ width: r.bar }} />
                  <span className="relative">{r.cd}</span>
                </span>
              )}
              <span className="ml-[2px] whitespace-nowrap">{r.d}</span>
            </div>
          ))}
        </div>
        <div className={`w-[16px] flex flex-col border-l border-[#d4d0c8] ${dither}`}>
          <ScrollArrow up />
          <div className="h-[8px] mt-[28px] bg-[#d4d0c8] border border-t-white border-l-white border-b-[#404040] border-r-[#404040]" />
          <div className="flex-1" />
          <ScrollArrow />
        </div>
      </div>
    </div>
  );
}

const topTabs = [
  ['Orders', 'w-[42px]'],
  ['Strategies', 'w-[60px]'],
  ['Executions', 'w-[64px]'],
  ['Positions', 'w-[53px]'],
  ['Accounts', 'w-[56px]'],
];
const subTabs = [
  ['Graphs', 'w-[44px]'],
  ['Executions', 'w-[63px]'],
  ['Trades', 'w-[44px]'],
  ['Periods', 'w-[46px]'],
  ['Orders', 'w-[42px]'],
  ['Journal', 'w-[45px]'],
];

const perfRows: [string, string, string, string, string][] = [
  ['Total Net Profit', '$-33.00', '$118.50', '$-151.50', 'rbr'],
  ['Gross Profit', '$606.00', '$391.50', '$214.50', 'bbb'],
  ['Gross Loss', '$-639.00', '$-273.00', '$-366.00', 'rrr'],
  ['Commission', '$63.00', '$31.50', '$31.50', 'bbb'],
  ['Profit Factor', '0.95', '1.43', '0.59', 'bbb'],
  ['Cumulative Profit', '-0.04%', '0.03%', '-0.06%', 'bbr'],
  ['Max. Drawdown', '-0.12%', '-0.06%', '-0.06%', 'rrr'],
  ['Sharpe Ratio', '1.00', '1.00', '1.00', 'bbb'],
  ['', '', '', '', 'bbb'],
  ['Start Date', '9/28/2010', '', '', 'bbb'],
  ['End Date', '9/28/2010', '', '', 'bbb'],
  ['', '', '', '', 'bbb'],
];

function ControlCenter() {
  return (
    <Win className="left-0 top-[775px] w-[961px] h-[418px] text-[11px]">
      <TitleBar
        title="Control Center - Perry"
        h="h-[19px]"
        pr="pr-[1px]"
        lock={false}
        icon={
          <svg width="14" height="14" viewBox="0 0 14 14" className="shrink-0 ml-[3px]">
            <path d="M2 3 C5 4 6 8 7 12 C8 8 9 4 12 2" stroke="#c02020" strokeWidth="2" fill="none" />
          </svg>
        }
      />
      <div className="h-[25px] shrink-0 flex items-center gap-[17px] pl-[15px] bg-linear-to-r from-[#d8d5ce] to-[#f0efeb]">
        <span>File</span>
        <span>Tools</span>
        <span>Help</span>
        <span className="ml-[2px]">[+/-]</span>
      </div>
      <div className="h-[23px] shrink-0 flex items-end pl-[5px] border-t-2 border-[#808080]">
        {topTabs.map(([t, w]) => (
          <div key={t} className={`${w} h-[19px] text-center leading-[18px] border-t border-l border-white border-r border-r-[#404040]`}>
            {t}
          </div>
        ))}
        <div className="w-[117px] h-[21px] text-center leading-[16px] border-t border-l border-white border-r border-r-[#404040]">Account Performance</div>
        <div className="w-[39px] h-[19px] ml-px pl-[4px] leading-[18px] border-t border-white border-r border-r-[#404040]">Log</div>
      </div>
      <div className="w-[951px] ml-px h-[321px] shrink-0 border-t border-l border-white border-r border-b border-r-[#808080] border-b-[#808080] flex flex-col">
        <div className="flex items-center h-[26px] mt-[8px] ml-[12px] shrink-0">
          <div className="w-[103px] h-[26px] text-center leading-[24px] border border-t-[#404040] border-l-[#404040] border-b-black border-r-black shadow-[inset_1px_1px_0_#fff,inset_-1px_-1px_0_#808080]">Generate</div>
          <span className="ml-[27px] w-[39px] mb-[5px]">From:</span>
          <Combo className="w-[102px] h-[20px] mb-[5px]" text="  9/28/2010" />
          <span className="ml-[28px] w-[37px] mb-[5px]">To:</span>
          <Combo className="w-[103px] h-[20px] mb-[5px]" text="  9/28/2010" />
          <span className="ml-[28px] w-[38px] mb-[5px]">Mode:</span>
          <Combo className="w-[102px] h-[20px] mb-[5px]" text="Percent" />
          <div className="ml-[33px] w-[104px] h-[26px] text-center leading-[24px] border border-t-white border-l-white border-b-[#404040] border-r-[#404040]">Advanced &gt;&gt;</div>
          <div className="ml-[17px] w-[12px] h-[12px] mb-[3px] bg-white border border-t-[#606060] border-l-[#606060] flex items-center justify-center">
            <svg width="9" height="9" viewBox="0 0 9 9">
              <path d="M1 4 L3.5 7 L8 1" stroke="#000" strokeWidth="2" fill="none" />
            </svg>
          </div>
          <span className="ml-[5px] mb-[3px] text-[10.5px]">Group trades by ATM strategy</span>
        </div>
        <div className="flex items-end h-[22px] mt-[4px] ml-[6px] shrink-0">
          <div className="w-[56px] h-[21px] text-center leading-[17px] border-t border-l border-white border-r border-r-[#404040]">Summary</div>
          {subTabs.map(([t, w]) => (
            <div key={t} className={`${w} h-[19px] ml-px text-center leading-[18px] border-t border-l border-white border-r border-r-[#404040]`}>
              {t}
            </div>
          ))}
        </div>
        <div className="ml-[9px] w-[933px] h-[250px] mt-[2px] border-t-[3px] border-l-[2px] border-[#505050] flex overflow-hidden">
          <div className="w-[914px] shrink-0">
            <div className="grid grid-cols-[228px_228px_228px_230px] h-[19px] bg-[#d4d0c8] text-center leading-[19px] border-b border-white">
              {['Performance', 'All Trades', 'Long Trades', 'Short Trades'].map((h) => (
                <div key={h} className="border-r border-white">{h}</div>
              ))}
            </div>
            {perfRows.map(([name, all, long, short, cols], i) => (
              <div key={i} className="grid grid-cols-[228px_228px_228px_230px] h-[19px] bg-white text-center leading-[18px] border-b border-black">
                <div className="bg-[#f3f3f3] border-r border-black">{name}</div>
                <div className={`border-r border-black ${cols[0] === 'r' ? 'text-[#ff0000]' : ''}`}>{all}</div>
                <div className={`border-r border-black ${cols[1] === 'r' ? 'text-[#ff0000]' : ''}`}>{long}</div>
                <div className={cols[2] === 'r' ? 'text-[#ff0000]' : ''}>{short}</div>
              </div>
            ))}
          </div>
          <div className={`w-[17px] shrink-0 flex flex-col ${dither}`}>
            <ScrollArrow up />
            <div className="h-[50px] mt-[1px] bg-[#d4d0c8] border border-t-white border-l-white border-b-[#404040] border-r-[#404040]" />
            <div className="flex-1" />
            <ScrollArrow />
          </div>
        </div>
      </div>
      <div className="flex h-[16px] mt-[6px] ml-[2px] shrink-0">
        <div className="w-[109px] bg-[#90ee90] border border-t-[#606060] border-l-[#606060] border-b-white border-r-white leading-[15px] pl-[3px] whitespace-nowrap text-[10.5px]">Connected - Zen-Fire</div>
        <div className="w-[827px] ml-px border border-t-[#808080] border-l-[#808080] border-b-white border-r-white" />
        <svg width="12" height="14" viewBox="0 0 12 14" className="ml-[2px] mt-[2px]">
          <path d="M10 2 L3 13 M10 6 L6 13 M10 10 L9 13" stroke="#808080" strokeDasharray="2 2" />
        </svg>
      </div>
    </Win>
  );
}

const newsRows = [
  ['Canadian Dollar Working Higher From (USDCAD) Support Line', '9/28/2010 4:17:55 PM', 'RssDailyFX'],
  ['New Zealand Dollar Cross Pick 09.28.10', '9/28/2010 4:11:13 PM', 'RssDailyFX'],
  ['Euro Rally Confined By Major Resistance, U.S. Dollar Remains Under Pressure', '9/28/2010 4:07:33 PM', 'RssDailyFX'],
];

function NewsWindow() {
  return (
    <Win className="left-[966px] top-[773px] w-[960px] h-[181px] text-[11px]">
      <TitleBar
        title="News - 3"
        h="h-[17px]"
        pr="pr-[10px]"
        icon={
          <svg width="12" height="12" viewBox="0 0 12 12" className="shrink-0">
            <rect x="0.5" y="0.5" width="11" height="11" fill="#d4d0c8" stroke="#808080" />
            <path d="M2 3 H6 M2 5 H6 M2 7 H10 M2 9 H10" stroke="#606060" />
          </svg>
        }
      />
      <div className="flex flex-1 mt-px border-t border-[#808080]">
        <div className="w-[210px] shrink-0 flex flex-col items-start pl-[8px] border-r-2 border-[#808080]">
          <div className="w-[197px] text-center h-[22px] leading-[22px]">Filter:</div>
          <Combo className="w-[197px] h-[19px]" text="<ALL>" />
          <div className="w-[197px] text-center h-[21px] leading-[21px]">Alerts:</div>
          <div className="w-[197px] h-[76px] bg-white border border-t-[#808080] border-l-[#808080] border-b-[#e8e8e8] border-r-[#e8e8e8]" />
        </div>
        <div className="ml-[5px] mb-[5px] w-[732px] bg-[#a9a9a9] border-t-[4px] border-l-[3px] border-[#606060] pt-[2px]">
          <div className="grid grid-cols-[434px_146px_146px] w-[726px] h-[19px] bg-[#d4d0c8] text-center leading-[19px] border-b border-white">
            {['Headline', 'Time', 'Provider'].map((h) => (
              <div key={h} className="border-r border-white">{h}</div>
            ))}
          </div>
          {newsRows.map(([h, t, p]) => (
            <div key={h} className="grid grid-cols-[434px_146px_146px] w-[726px] h-[21px] bg-white text-center leading-[20px] border-b border-black">
              <div className="border-r border-black whitespace-nowrap">{h}</div>
              <div className="border-r border-black">{t}</div>
              <div>{p}</div>
            </div>
          ))}
        </div>
      </div>
    </Win>
  );
}

export default function App() {
  return (
    <div className="relative w-[1920px] h-[1200px] overflow-hidden bg-linear-to-b from-[#74808f] via-[#74808f] to-[#3e4a5a] font-['Liberation_Sans',Arial,sans-serif] text-black">
      <Win className="left-0 top-[3px] w-[964px] h-[773px]">
        <TitleBar big title="NQ 12-10 (4 Range)  9/28/2010" h="h-[18px]" pr="pr-[2px]" icon={<ChartIcon />} />
        <div className="flex items-start">
          <LeftChart />
          <OrderPanel />
        </div>
      </Win>
      <Win className="left-[966px] top-[4px] w-[936px] h-[768px]">
        <TitleBar big title="NQ 12-10 (8 Range)  9/28/2010" h="h-[19px]" pr="pr-[2px]" icon={<ChartIcon />} />
        <RightChart />
        <EconReader />
      </Win>
      <ControlCenter />
      <NewsWindow />
      <div className="absolute left-[966px] top-[954px] w-[960px] h-[260px] bg-white border-t-2 border-t-[#808080] border-l-4 border-l-[#d4d0c8]" />
    </div>
  );
}
